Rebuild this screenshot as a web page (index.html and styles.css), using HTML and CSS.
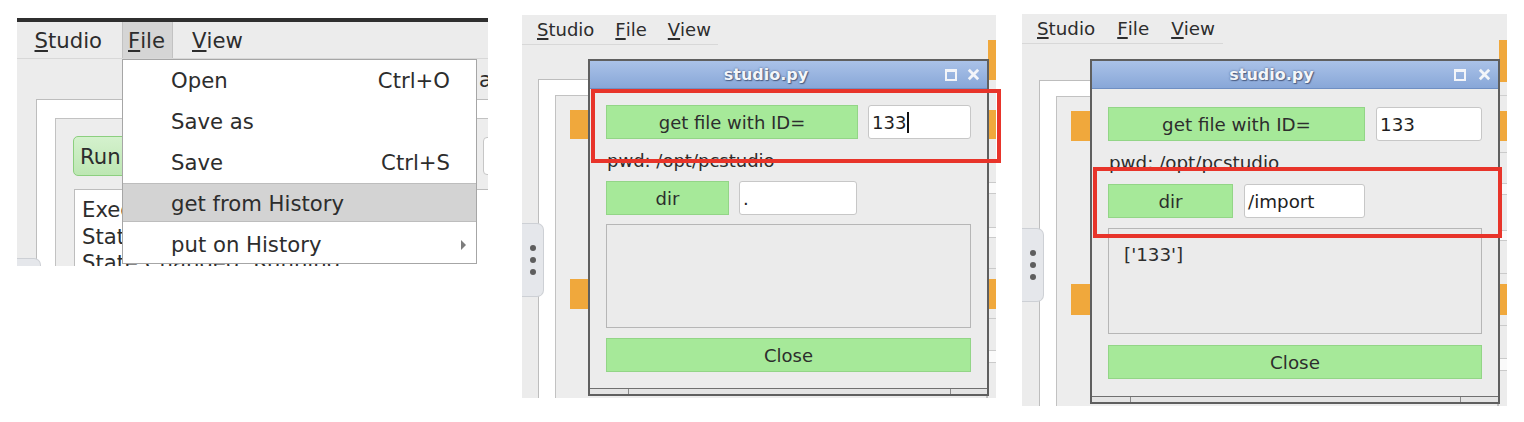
FILE: index.html
```html
<!DOCTYPE html>
<html>
<head>
<meta charset="utf-8">
<title>studio.py</title>
<link rel="stylesheet" href="styles.css">
</head>
<body>
<div class="shots">

  <section class="panel p1">
    <nav class="menubar mb1">
      <span class="mi"><u>S</u>tudio</span>
      <span class="mi on"><u>F</u>ile</span>
      <span class="mi"><u>V</u>iew</span>
    </nav>
    <div class="app1">
      <div class="strip-a"><span>a</span></div>
      <div class="frame frame1">
        <div class="inner inner1">
          <div class="tb1"><span class="run">Run</span><span class="edit1"></span></div>
          <div class="log1">Executing<br>State: Idle<br>State Changed: Running</div>
        </div>
      </div>
    </div>
    <div class="handle h1"><i></i><i></i><i></i></div>
    <div class="dropdown">
      <div class="dd-row"><span>Open</span><span>Ctrl+O</span></div>
      <div class="dd-row"><span>Save as</span></div>
      <div class="dd-row"><span>Save</span><span>Ctrl+S</span></div>
      <div class="dd-row hl"><span>get from History</span></div>
      <div class="dd-row sub"><span>put on History</span><i class="arrow"></i></div>
    </div>
  </section>

  <section class="panel p2">
    <div class="app">
      <div class="main">
        <nav class="menubar mb2">
          <span class="mi"><u>S</u>tudio</span>
          <span class="mi"><u>F</u>ile</span>
          <span class="mi"><u>V</u>iew</span>
        </nav>
        <div class="frame frame2">
          <div class="inner inner2">
            <span class="org o1"></span>
            <span class="org o2"></span>
          </div>
        </div>
      </div>
      <div class="sliver"></div>
    </div>
    <div class="handle h2"><i></i><i></i><i></i></div>
    <div class="dlg d2">
      <div class="tbar">
        <span class="ttl">studio.py</span>
        <span class="tbtns">
          <svg width="12" height="12" viewBox="0 0 12 12"><rect x="1" y="1" width="10" height="10" fill="none" stroke="#f3f5f9" stroke-width="2"/><rect x="1" y="1" width="10" height="2" fill="#f3f5f9"/></svg>
          <svg width="13" height="13" viewBox="0 0 13 13"><path d="M1.8 1.8L11.2 11.2M11.2 1.8L1.8 11.2" stroke="#f3f5f9" stroke-width="2.8" fill="none"/></svg>
        </span>
      </div>
      <div class="dbody">
        <div class="row r1"><span class="gbtn">get file with ID=</span><span class="inp">133<i class="caret"></i></span></div>
        <div class="pwd">pwd: /opt/pcstudio</div>
        <div class="row r2"><span class="gbtn">dir</span><span class="inp">.</span></div>
        <div class="out"></div>
        <div class="gbtn close">Close</div>
      </div>
      <div class="dstrip"><i></i><i></i><i></i></div>
    </div>
    <div class="mark m2"></div>
  </section>

  <section class="panel p3">
    <div class="app">
      <div class="main">
        <nav class="menubar mb3">
          <span class="mi"><u>S</u>tudio</span>
          <span class="mi"><u>F</u>ile</span>
          <span class="mi"><u>V</u>iew</span>
        </nav>
        <div class="frame frame3">
          <div class="inner inner3">
            <span class="org o1"></span>
            <span class="org o2"></span>
          </div>
        </div>
      </div>
      <div class="sliver"></div>
    </div>
    <div class="handle h3"><i></i><i></i><i></i></div>
    <div class="dlg d3">
      <div class="tbar">
        <span class="ttl">studio.py</span>
        <span class="tbtns">
          <svg width="12" height="12" viewBox="0 0 12 12"><rect x="1" y="1" width="10" height="10" fill="none" stroke="#f3f5f9" stroke-width="2"/><rect x="1" y="1" width="10" height="2" fill="#f3f5f9"/></svg>
          <svg width="13" height="13" viewBox="0 0 13 13"><path d="M1.8 1.8L11.2 11.2M11.2 1.8L1.8 11.2" stroke="#f3f5f9" stroke-width="2.8" fill="none"/></svg>
        </span>
      </div>
      <div class="dbody">
        <div class="row r1"><span class="gbtn">get file with ID=</span><span class="inp">133</span></div>
        <div class="pwd">pwd: /opt/pcstudio</div>
        <div class="row r2"><span class="gbtn">dir</span><span class="inp">/import</span></div>
        <div class="out">['133']</div>
        <div class="gbtn close">Close</div>
      </div>
      <div class="dstrip"><i></i><i></i><i></i></div>
    </div>
    <div class="mark m3"></div>
  </section>

</div>
</body>
</html>
```

FILE: styles.css
```css
* { box-sizing: border-box; margin: 0; padding: 0; }
html, body { background: #fff; }
body {
  font-family: "DejaVu Sans", "Noto Sans", sans-serif;
  color: #2d2d2d;
  width: 1524px;
  height: 422px;
  overflow: hidden;
}
.shots { display: flex; align-items: flex-start; }
.panel { position: relative; flex: none; background: #ececec; }
u { text-decoration: underline; text-decoration-thickness: 1.5px; text-underline-offset: 2px; }

.menubar { display: flex; align-items: center; border-bottom: 1px solid #d8d8d8; flex: none; }
.mi { display: flex; align-items: center; height: 100%; white-space: nowrap; }

/* ---------- panel 1 ---------- */
.p1 {
  width: 471px; height: 248px;
  margin: 18px 0 0 17px;
  border-top: 4px solid #2f2f2f;
  overflow: hidden;
  font-size: 21.2px;
  display: flex; flex-direction: column;
}
.mb1 { height: 37px; padding-left: 11px; gap: 13px; }
.mb1 .mi { padding: 0 6.5px; }
.mb1 .mi.on {
  background: #d5d5d5;
  border-left: 1px solid #c2c2c2;
  border-right: 1px solid #c2c2c2;
  padding: 0 6.5px 0 5.5px;
}
.app1 { flex: 1; min-height: 0; }
.strip-a { height: 40px; display: flex; align-items: center; padding-left: 462px; }
.frame { background: #fff; border: 1px solid #bdbdbd; }
.inner { background: #ededed; border: 1px solid #c2c2c2; }
.frame1 { margin-left: 19px; width: 700px; height: 300px; padding: 18px 0 0 18px; }
.inner1 { width: 680px; height: 300px; padding: 17px 0 0 17px; }
.tb1 { display: flex; justify-content: space-between; width: 460px; height: 40px; }
.run {
  width: 80px;
  border: 1px solid #8ccf7f; border-radius: 5px;
  background: linear-gradient(#d4f1cd, #bde7b3);
  display: flex; align-items: center; padding-left: 6px;
}
.edit1 { width: 50px; margin: 1px 0; border: 1px solid #c6c6c6; border-radius: 4px; background: #fff; }
.log1 {
  margin: 13px 0 0 1px; width: 600px; height: 200px;
  background: #fff; border: 1px solid #bdbdbd;
  padding: 7px; line-height: 26.5px; white-space: nowrap;
}
.dropdown {
  position: absolute; left: 105px; top: 37px;
  width: 355px; height: 205px;
  background: #fff; border: 1px solid #a6a6a6;
  overflow: hidden;
}
.dd-row {
  height: 41px; display: flex; align-items: center; justify-content: space-between;
  padding: 0 26px 0 48px; white-space: nowrap;
}
.dd-row.hl {
  background: #d3d3d3;
  box-shadow: inset 0 1px #bdbdbd, inset 0 -2px #fff, inset 0 -3px #bdbdbd;
}
.dd-row.sub { padding-right: 10px; }
.arrow {
  width: 0; height: 0;
  border-left: 5px solid #7d7d7d;
  border-top: 5px solid transparent;
  border-bottom: 5px solid transparent;
}

/* ---------- panels 2 & 3 ---------- */
.p2 { width: 474px; height: 383px; margin: 15px 0 0 34px; font-size: 18px; }
.p3 { width: 485px; height: 392px; margin: 14px 0 0 26px; font-size: 18.3px; }
.app { display: grid; height: 100%; overflow: hidden; }
.p2 .app { grid-template-columns: 466px 8px; }
.p3 .app { grid-template-columns: 477px 8px; }
.main { display: flex; flex-direction: column; min-width: 0; }
.mb2 { height: 30px; width: 196px; padding-left: 15px; gap: 21px; }
.mb3 { height: 30px; width: 201px; padding-left: 15px; gap: 22px; }
.frame2 { margin: 34px 0 0 16px; height: 420px; padding: 15px 0 0 16px; }
.frame3 { margin: 36px 0 0 17px; height: 420px; padding: 15px 0 0 16px; }
.inner2, .inner3 {
  height: 420px; padding: 14px 0 0 14px;
  display: flex; flex-direction: column; align-items: flex-start;
}
.org { background: #f0a83c; width: 40px; flex: none; }
.inner2 .o1 { height: 29px; }
.inner2 .o2 { height: 30px; margin-top: 140px; }
.inner3 .o1 { height: 30px; }
.inner3 .o2 { height: 31px; margin-top: 143px; }

.p2 .sliver {
  background: linear-gradient(#ececec 0 25px, #f0a83c 25px 65px, #ececec 65px 75px, #cfcfcf 75px 76px,
    #ececec 76px 95px, #f0a83c 95px 124px, #ececec 124px 167px, #cacaca 167px 168px,
    #fafafa 168px 178px, #cacaca 178px 179px, #ececec 179px 212px, #cacaca 212px 213px,
    #fafafa 213px 222px, #cacaca 222px 223px, #ececec 223px 253px, #cacaca 253px 254px,
    #ececec 254px 264px, #f0a83c 264px 294px, #ececec 294px 303px, #cacaca 303px 304px,
    #ececec 304px 335px, #cacaca 335px 336px, #fafafa 336px 347px, #cacaca 347px 348px, #ececec 348px);
}
.p3 .sliver {
  background: linear-gradient(#ececec 0 26px, #f0a83c 26px 68px, #ececec 68px 81px, #cfcfcf 81px 82px,
    #ececec 82px 97px, #f0a83c 97px 127px, #ececec 127px 138px, #cacaca 138px 139px,
    #ececec 139px 169px, #cacaca 169px 170px, #fafafa 170px 180px, #cacaca 180px 181px,
    #ececec 181px 216px, #cacaca 216px 217px, #fafafa 217px 226px, #cacaca 226px 227px,
    #ececec 227px 259px, #cacaca 259px 260px, #ececec 260px 270px, #f0a83c 270px 301px,
    #ececec 301px 311px, #cacaca 311px 312px, #ececec 312px 344px, #cacaca 344px 345px,
    #fafafa 345px 356px, #cacaca 356px 357px, #ececec 357px);
}

.handle {
  position: absolute; left: 0; width: 22px; height: 74px;
  background: #e5e7eb;
  border: 1px solid #cdd0d5; border-left: none;
  border-radius: 0 7px 7px 0;
  display: flex; flex-direction: column; align-items: center; justify-content: center; gap: 6px;
}
.handle i { width: 6px; height: 6px; border-radius: 50%; background: #5e5e5e; }
.h1 { top: 236px; width: 24px; }
.h2 { top: 208px; }
.h3 { top: 214px; }

/* ---------- dialog ---------- */
.dlg {
  position: absolute;
  background: #ececec;
  border: 2px solid #5f5f5f;
  display: flex; flex-direction: column;
}
.d2 { left: 66px; top: 44px; width: 401px; height: 337px; }
.d3 { left: 68px; top: 45px; width: 410px; height: 345px; }
.tbar {
  height: 28px; flex: none;
  display: flex; align-items: center;
  background: linear-gradient(#aac2e8, #88a7d8);
  border-bottom: 1px solid #6f8fc3;
}
.ttl {
  flex: 1; text-align: center;
  font-weight: bold; font-size: 16px;
  color: #f3f5f9;
  text-shadow: 0 0 2px #42557a, 1px 1px 1px #4f6186;
}
.tbtns { display: flex; align-items: center; padding: 0 7px 0 3px; }
.tbtns svg { display: block; }
.d2 .tbtns { gap: 10px; }
.d3 .tbtns { gap: 12px; }
.dbody { padding: 16px 16px 0; display: flex; flex-direction: column; }
.d3 .dbody { padding-top: 18px; }
.row { display: flex; height: 34px; flex: none; }
.d2 .row { gap: 10px; }
.d3 .row { gap: 11px; }
.gbtn {
  background: #a6e999;
  border: 1px solid #93d587;
  display: flex; align-items: center; justify-content: center;
  flex: none; white-space: nowrap;
}
.inp {
  background: #fff;
  border: 1px solid #c7c7c7; border-radius: 3px;
  padding-left: 3px;
  display: flex; align-items: center;
  flex: none; color: #1e1e1e;
}
.caret { display: block; width: 1.5px; height: 21px; background: #111; margin-left: 1px; }
.d2 .r1 .gbtn { width: 252px; }
.d2 .r1 .inp { width: 103px; }
.d2 .r2 .gbtn { width: 123px; }
.d2 .r2 .inp { width: 118px; }
.d3 .r1 .gbtn { width: 257px; }
.d3 .r1 .inp { width: 106px; }
.d3 .r2 .gbtn { width: 125px; }
.d3 .r2 .inp { width: 121px; }
.pwd { display: flex; align-items: center; padding-left: 1px; white-space: nowrap; }
.d2 .pwd { height: 42px; }
.d3 .pwd { height: 43px; }
.out { border: 1px solid #b6b6b6; background: #ebebeb; flex: none; }
.d2 .out { height: 104px; margin-top: 9px; }
.d3 .out { height: 106px; margin-top: 10px; padding: 15px; line-height: 22px; }
.close { height: 34px; }
.d2 .close { margin-top: 10px; }
.d3 .close { margin-top: 11px; }
.dstrip {
  margin-top: auto; height: 6px; flex: none;
  border-top: 1px solid #707070;
  background: #e4e4e4;
  display: flex;
}
.dstrip i { display: block; border-left: 1px solid #8a8a8a; }
.dstrip i:first-child { border-left: none; }
.dstrip i:last-child { flex: 1; }
.d2 .dstrip i:nth-child(1) { width: 38px; }
.d2 .dstrip i:nth-child(2) { width: 322px; }
.d3 .dstrip i:nth-child(1) { width: 38px; }
.d3 .dstrip i:nth-child(2) { width: 330px; }

/* ---------- red annotation marks ---------- */
.mark { position: absolute; border: 4px solid #e8342a; }
.m2 { left: 69px; top: 74px; width: 410px; height: 74px; }
.m3 { left: 71px; top: 153px; width: 409px; height: 71px; }
```
